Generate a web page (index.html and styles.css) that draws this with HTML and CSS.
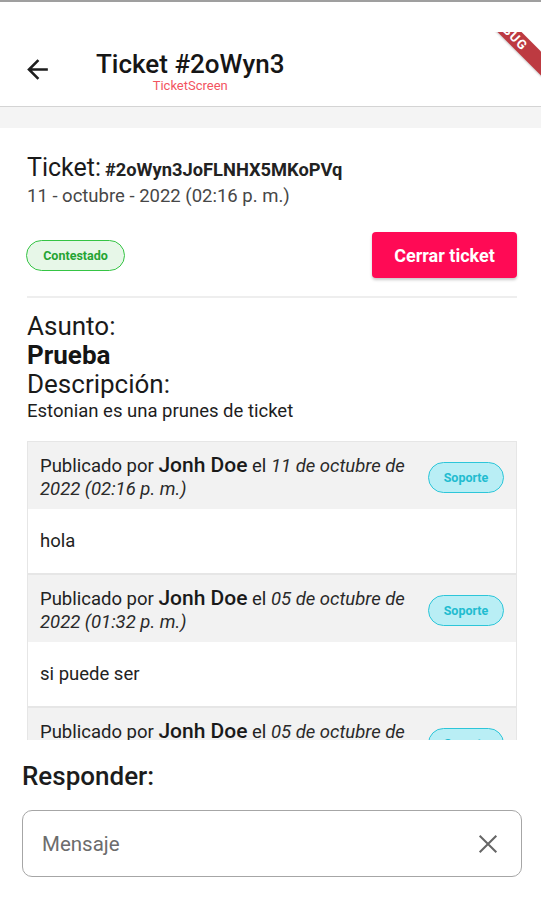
FILE: index.html
```html
<!DOCTYPE html>
<html lang="es">
<head>
<meta charset="utf-8">
<title>Ticket #2oWyn3</title>
<link rel="stylesheet" href="styles.css">
</head>
<body>
<div class="statusline"></div>
<header class="appbar">
  <div class="toolbar">
    <svg class="back" viewBox="0 0 24 24" aria-hidden="true"><path d="M20 11H7.83l5.59-5.59L12 4l-8 8 8 8 1.41-1.41L7.83 13H20v-2z"/></svg>
    <div class="titles">
      <div class="title">Ticket #2oWyn3</div>
      <div class="subtitle">TicketScreen</div>
    </div>
  </div>
  <div class="debug"><div class="ribbon">DEBUG</div></div>
</header>
<div class="strip"></div>
<main class="content">
  <section class="ticket-head">
    <div class="ticket-id"><span class="lbl">Ticket:</span> <span class="id">#2oWyn3JoFLNHX5MKoPVq</span></div>
    <div class="date">11 - octubre - 2022 (02:16 p. m.)</div>
  </section>
  <div class="actions">
    <span class="chip status">Contestado</span>
    <button class="close-btn">Cerrar ticket</button>
  </div>
  <div class="divider"></div>
  <section class="subject">
    <div class="label">Asunto:</div>
    <div class="subject-text">Prueba</div>
    <div class="label">Descripción:</div>
    <div class="desc">Estonian es una prunes de ticket</div>
  </section>
  <div class="messages">
    <article class="msg">
      <div class="msg-head">
        <p class="meta">Publicado por <b>Jonh Doe</b> el <i>11 de octubre de 2022 (02:16 p. m.)</i></p>
        <span class="chip role">Soporte</span>
      </div>
      <div class="msg-body">hola</div>
    </article>
    <article class="msg">
      <div class="msg-head">
        <p class="meta">Publicado por <b>Jonh Doe</b> el <i>05 de octubre de 2022 (01:32 p. m.)</i></p>
        <span class="chip role">Soporte</span>
      </div>
      <div class="msg-body">si puede ser</div>
    </article>
    <article class="msg">
      <div class="msg-head">
        <p class="meta">Publicado por <b>Jonh Doe</b> el <i>05 de octubre de 2022 (01:32 p. m.)</i></p>
        <span class="chip role">Soporte</span>
      </div>
      <div class="msg-body">prueba</div>
    </article>
  </div>
</main>
<footer class="reply">
  <div class="reply-label">Responder:</div>
  <div class="input">
    <span class="placeholder">Mensaje</span>
    <svg class="clear" viewBox="0 0 24 24" aria-hidden="true"><path d="M5 5L19 19M19 5L5 19"/></svg>
  </div>
</footer>
</body>
</html>
```
FILE: styles.css
```css
* { box-sizing: border-box; }
body {
  margin: 0;
  width: 541px;
  height: 900px;
  overflow: hidden;
  background: #ffffff;
  font-family: Roboto, "Liberation Sans", sans-serif;
  color: #1b1b1b;
}
.statusline { height: 2px; background: #9f9f9f; }
.appbar {
  position: relative;
  height: 105px;
  padding-top: 30px;
  background: #ffffff;
  border-bottom: 1px solid #d4d4d4;
}
.toolbar {
  height: 74px;
  display: flex;
  align-items: center;
}
.back {
  width: 31px;
  height: 31px;
  margin-left: 22px;
  fill: #1e1e1e;
}
.titles {
  margin-left: 43px;
  margin-top: 6px;
  display: flex;
  flex-direction: column;
  align-items: center;
}
.title {
  font-size: 26px;
  font-weight: 500;
  line-height: 28px;
  color: #161616;
}
.subtitle {
  font-size: 13px;
  line-height: 16px;
  color: #f2545f;
}
.debug {
  position: absolute;
  top: 30px;
  right: 0;
  width: 90px;
  height: 90px;
  overflow: hidden;
}
.ribbon {
  position: absolute;
  left: 3px;
  top: -9px;
  width: 110px;
  height: 17px;
  transform: rotate(45deg);
  background: #bd3a41;
  color: #ffffff;
  font-size: 13px;
  font-weight: 700;
  line-height: 17px;
  letter-spacing: 1px;
  text-align: center;
  box-shadow: 0 1px 2px rgba(0,0,0,0.2);
}
.strip { height: 21px; background: #f4f4f4; }
.content { padding: 26px 24px 0 27px; }
.ticket-id { line-height: 28px; }
.ticket-id .lbl { font-size: 25px; color: #1a1a1a; }
.ticket-id .id { font-size: 18.3px; font-weight: 700; color: #222; }
.date { font-size: 18.5px; line-height: 22px; color: #474747; }
.actions {
  margin-top: 25px;
  height: 46px;
  display: flex;
  align-items: center;
  justify-content: space-between;
}
.chip {
  display: inline-flex;
  align-items: center;
  justify-content: center;
  height: 31px;
  border-radius: 16px;
  font-size: 12.5px;
  font-weight: 700;
}
.chip.status {
  width: 99px;
  margin-left: -1px;
  background: #e7f7e8;
  border: 1.5px solid #35c444;
  color: #25a433;
}
.close-btn {
  width: 145px;
  height: 46px;
  border: none;
  border-radius: 4px;
  background: #ff0a55;
  color: #ffffff;
  font-family: inherit;
  font-size: 18px;
  font-weight: 700;
  box-shadow: 0 2px 3px rgba(0,0,0,0.22);
  padding: 0;
}
.divider { margin-top: 18px; height: 2px; background: #eeeeee; }
.subject { margin-top: 14px; }
.label { font-size: 26px; line-height: 29px; color: #1a1a1a; }
.subject-text { font-size: 26px; line-height: 29px; font-weight: 700; color: #151515; }
.desc { font-size: 18.5px; line-height: 24px; color: #1d1d1d; }
.messages {
  margin-top: 18px;
  height: 299px;
  overflow: hidden;
}
.msg { border: 1px solid #e6e6e6; }
.msg-head {
  height: 67px;
  background: #f2f2f2;
  padding: 12px 12px 9px 12px;
  display: flex;
  align-items: center;
  gap: 14px;
}
.meta {
  margin: 0;
  flex: 1;
  font-size: 18.5px;
  line-height: 23px;
  color: #222;
}
.meta b { font-size: 21px; font-weight: 500; color: #1a1a1a; }
.meta i { color: #2a2a2a; }
.chip.role {
  flex: none;
  width: 76px;
  background: #b9eef5;
  border: 1.5px solid #2dc6d9;
  color: #22bcd0;
}
.msg-body {
  height: 64px;
  padding: 21px 12px;
  font-size: 18.5px;
  line-height: 22px;
  color: #222;
  background: #ffffff;
}
.reply { padding: 21px 19px 0 22px; }
.reply-label { font-size: 26px; font-weight: 500; line-height: 30px; color: #1c1c1c; }
.input {
  margin-top: 19px;
  height: 67px;
  border: 1.5px solid #a6a6a6;
  border-radius: 10px;
  display: flex;
  align-items: center;
  justify-content: space-between;
  padding: 0 20px 0 19px;
}
.placeholder { font-size: 20.5px; color: #6c6c6c; }
.clear {
  width: 26px;
  height: 26px;
  fill: none;
  stroke: #666666;
  stroke-width: 1.9;
  stroke-linecap: square;
}
```
